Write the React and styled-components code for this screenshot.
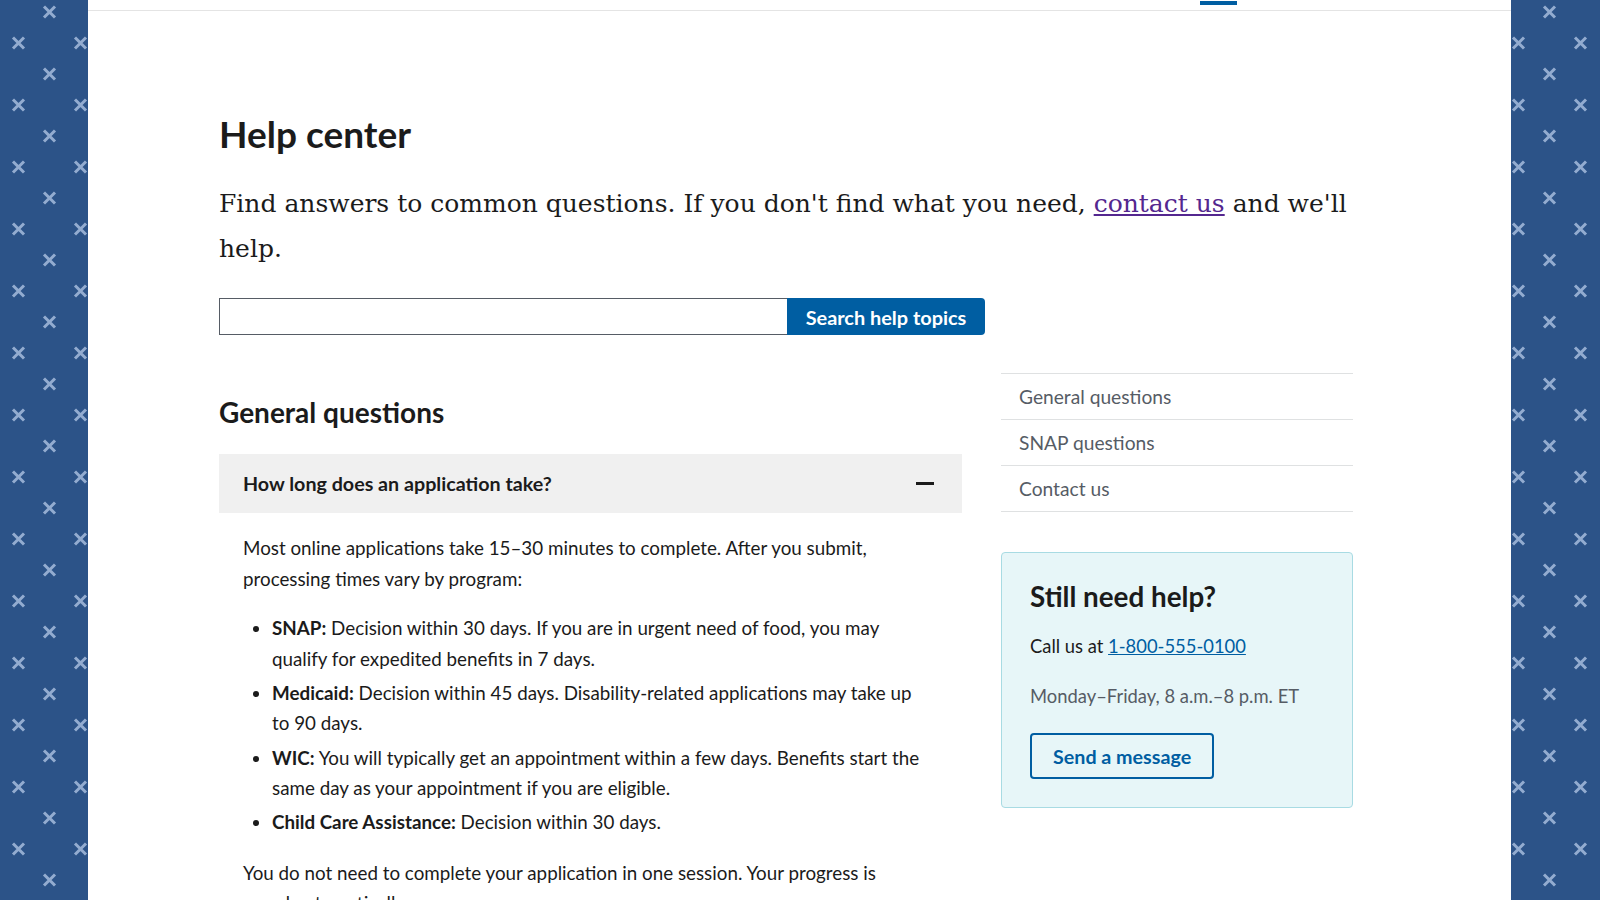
import React from 'react'
import styled, { createGlobalStyle } from 'styled-components'

const GlobalStyle = createGlobalStyle`
  html, body {
    margin: 0;
    padding: 0;
  }
  body {
    font-family: "Lato", "Noto Sans", sans-serif;
    color: #1b1b1b;
    background: #fff;
  }
  * { box-sizing: border-box; }
`

const Page = styled.div`
  display: flex;
  height: 100vh;
  overflow: hidden;
`

const SidePanel = styled.div`
  flex: 0 0 ${p => p.$w}px;
  background: #2c5388;
  svg { display: block; width: 100%; height: 100%; }
`

const Main = styled.main`
  flex: 1;
  background: #fff;
  overflow: hidden;
`

// header that is scrolled off, only its bottom edge is visible
const Header = styled.header`
  height: 11px;
  border-bottom: 1px solid #e4e4e4;
  display: flex;
  justify-content: flex-end;
  padding-right: 274px;
`

const ActiveMark = styled.span`
  display: block;
  width: 37px;
  height: 4px;
  margin-top: 1px;
  background: #005ea2;
`

const Content = styled.div`
  width: 1265px;
  padding: 0 0 0 131px;
`

const Title = styled.h1`
  margin: 100px 0 0;
  font-size: 37px;
  line-height: 46px;
  font-weight: 700;
`

const Lead = styled.p`
  margin: 23.5px 0 0;
  font-family: "DejaVu Serif", serif;
  font-size: 25px;
  line-height: 45px;
  a { color: #54278f; }
`

const SearchForm = styled.form`
  display: flex;
  width: 766px;
  height: 37px;
  margin-top: 27.5px;
`

const SearchInput = styled.input`
  flex: 1;
  border: 1px solid #565c65;
  border-right: none;
  font: inherit;
  font-size: 18px;
  padding: 0 8px;
`

const SearchButton = styled.button`
  flex: 0 0 198px;
  border: none;
  border-radius: 0 4px 4px 0;
  background: #005ea2;
  color: #fff;
  font-family: inherit;
  font-size: 19.9px;
  font-weight: 700;
`

const Columns = styled.div`
  display: grid;
  grid-template-columns: 743px 352px;
  column-gap: 39px;
  margin-top: 38px;
  align-items: start;
`

const SectionTitle = styled.h2`
  margin: 22px 0 0;
  font-size: 28px;
  line-height: 34px;
  font-weight: 700;
`

const AccordionHead = styled.button`
  display: flex;
  width: 100%;
  align-items: center;
  justify-content: space-between;
  height: 59px;
  margin-top: 25px;
  padding: 0 28px 0 24px;
  border: none;
  background: #f0f0f0;
  color: #1b1b1b;
  font-family: inherit;
  font-size: 19.7px;
  font-weight: 700;
  text-align: left;
`

const AccordionBody = styled.div`
  padding: 20px 38px 0 24px;
  font-size: 18.8px;
  line-height: 30.6px;
  p { margin: 0; }
`

const List = styled.ul`
  margin: 19px 0 20px;
  padding-left: 29px;
  li { margin-bottom: 3.5px; }
  li:last-child { margin-bottom: 0; }
  li::marker { font-size: 18px; }
`

const Sidebar = styled.aside`
  display: flex;
  flex-direction: column;
  gap: 40px;
`

const SideNav = styled.nav`
  border-top: 1px solid #dfe1e2;
`

const SideNavItem = styled.a`
  display: block;
  padding: 8px 18px;
  border-bottom: 1px solid #dfe1e2;
  color: #565c65;
  font-size: 19.2px;
  line-height: 29px;
  text-decoration: none;
`

const Callout = styled.section`
  background: #e7f6f8;
  border: 1px solid #a8dbe3;
  border-radius: 4px;
  padding: 28px 28px 28px;
  font-size: 18.4px;
  line-height: 27px;
  p { margin: 0; }
  a { color: #005ea2; }
`

const CalloutTitle = styled.h3`
  margin: 0;
  font-size: 27.8px;
  line-height: 31px;
  font-weight: 700;
`

const CalloutText = styled.p`
  && { margin-top: ${p => p.$gap}px; }
  color: ${p => (p.$muted ? '#565c65' : '#1b1b1b')};
`

const OutlineButton = styled.button`
  margin-top: 23px;
  height: 46px;
  padding: 0 21px;
  background: transparent;
  border: 2px solid #005ea2;
  border-radius: 4px;
  color: #005ea2;
  font-family: inherit;
  font-size: 19.7px;
  font-weight: 700;
`

function Pattern({ id, offset }) {
  return (
    <svg aria-hidden="true">
      <defs>
        <pattern id={id} x={offset} y="0" width="62" height="62" patternUnits="userSpaceOnUse">
          <g stroke="#93acd0" strokeWidth="3">
            <path d="M13 37.5l11 11M24 37.5l-11 11" />
            <path d="M44 6.5l11 11M55 6.5l-11 11" />
          </g>
        </pattern>
      </defs>
      <rect width="100%" height="100%" fill={`url(#${id})`} />
    </svg>
  )
}

function MinusIcon() {
  return (
    <svg width="18" height="3" viewBox="0 0 18 3" aria-hidden="true">
      <rect width="18" height="3" fill="#1b1b1b" />
    </svg>
  )
}

export default function App() {
  return (
    <>
      <GlobalStyle />
      <Page>
        <SidePanel $w={88}>
          <Pattern id="dots-left" offset={0} />
        </SidePanel>
        <Main>
          <Header>
            <ActiveMark />
          </Header>
          <Content>
            <Title>Help center</Title>
            <Lead>
              Find answers to common questions. If you don't find what you need,{' '}
              <a href="#contact">contact us</a> and we'll help.
            </Lead>
            <SearchForm onSubmit={e => e.preventDefault()}>
              <SearchInput type="search" aria-label="Search help topics" />
              <SearchButton type="submit">Search help topics</SearchButton>
            </SearchForm>
            <Columns>
              <div>
                <SectionTitle>General questions</SectionTitle>
                <AccordionHead aria-expanded="true">
                  How long does an application take?
                  <MinusIcon />
                </AccordionHead>
                <AccordionBody>
                  <p>
                    Most online applications take 15–30 minutes to complete. After you submit,
                    processing times vary by program:
                  </p>
                  <List>
                    <li>
                      <strong>SNAP:</strong> Decision within 30 days. If you are in urgent need of food,
                      you may qualify for expedited benefits in 7 days.
                    </li>
                    <li>
                      <strong>Medicaid:</strong> Decision within 45 days. Disability-related applications
                      may take up to 90 days.
                    </li>
                    <li>
                      <strong>WIC:</strong> You will typically get an appointment within a few days.
                      Benefits start the same day as your appointment if you are eligible.
                    </li>
                    <li>
                      <strong>Child Care Assistance:</strong> Decision within 30 days.
                    </li>
                  </List>
                  <p>
                    You do not need to complete your application in one session. Your progress is
                    saved automatically.
                  </p>
                </AccordionBody>
              </div>
              <Sidebar>
                <SideNav>
                  <SideNavItem href="#general">General questions</SideNavItem>
                  <SideNavItem href="#snap">SNAP questions</SideNavItem>
                  <SideNavItem href="#contact">Contact us</SideNavItem>
                </SideNav>
                <Callout>
                  <CalloutTitle>Still need help?</CalloutTitle>
                  <CalloutText $gap={21}>
                    Call us at <a href="tel:18005550100">1-800-555-0100</a>
                  </CalloutText>
                  <CalloutText $gap={23} $muted>
                    Monday–Friday, 8 a.m.–8 p.m. ET
                  </CalloutText>
                  <OutlineButton type="button">Send a message</OutlineButton>
                </Callout>
              </Sidebar>
            </Columns>
          </Content>
        </Main>
        <SidePanel $w={89}>
          <Pattern id="dots-right" offset={-11} />
        </SidePanel>
      </Page>
    </>
  )
}
